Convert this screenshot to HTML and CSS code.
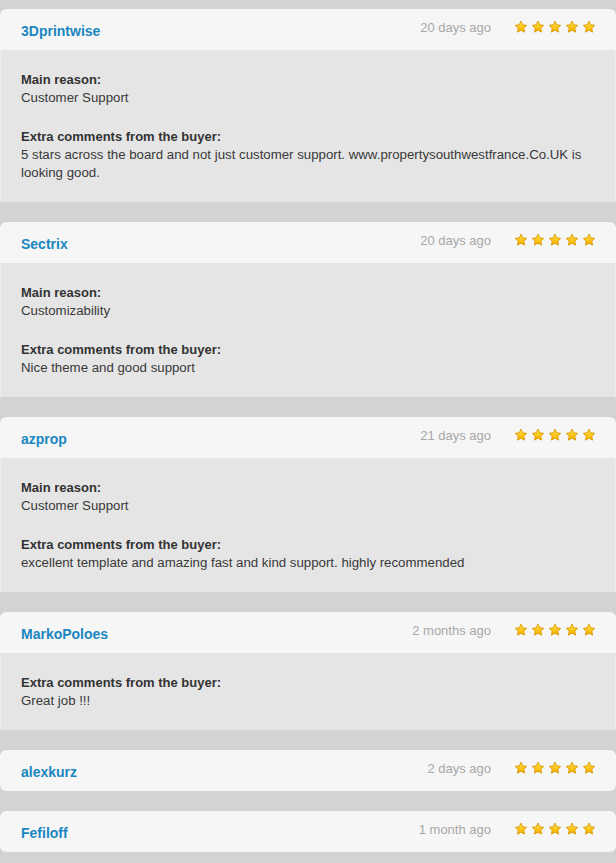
FILE: index.html
```html
<!DOCTYPE html>
<html lang="en">
<head>
    <meta charset="UTF-8">
    <meta name="viewport" content="width=device-width, initial-scale=1.0">
    <title>Buyer Reviews</title>
    <link rel="stylesheet" href="styles.css">
</head>
<body>
    <svg width="0" height="0" class="defs">
        <defs>
            <linearGradient id="star-fill" x1="0" y1="0" x2="0" y2="1">
                <stop offset="0" stop-color="#ffe15a"/>
                <stop offset="0.6" stop-color="#fcc313"/>
                <stop offset="1" stop-color="#f5a800"/>
            </linearGradient>
            <symbol id="star" viewBox="0 0 16 16">
                <path d="M8 1.2l2 4.3 4.6.6-3.4 3.2.9 4.6L8 11.6l-4.1 2.3.9-4.6L1.4 6.1 6 5.5z" fill="url(#star-fill)" stroke="#d99a00" stroke-width="1" stroke-linejoin="round"/>
            </symbol>
        </defs>
    </svg>

    <div class="reviews">
        <div class="review">
            <div class="review-head">
                <a class="buyer" href="#">3Dprintwise</a>
                <span class="date">20 days ago</span>
                <span class="stars">
                    <svg><use href="#star"/></svg><svg><use href="#star"/></svg><svg><use href="#star"/></svg><svg><use href="#star"/></svg><svg><use href="#star"/></svg>
                </span>
            </div>
            <div class="review-body">
                <p><strong>Main reason:</strong><br>Customer Support</p>
                <p><strong>Extra comments from the buyer:</strong><br>5 stars across the board and not just customer support. www.propertysouthwestfrance.Co.UK is looking good.</p>
            </div>
        </div>

        <div class="review">
            <div class="review-head">
                <a class="buyer" href="#">Sectrix</a>
                <span class="date">20 days ago</span>
                <span class="stars">
                    <svg><use href="#star"/></svg><svg><use href="#star"/></svg><svg><use href="#star"/></svg><svg><use href="#star"/></svg><svg><use href="#star"/></svg>
                </span>
            </div>
            <div class="review-body">
                <p><strong>Main reason:</strong><br>Customizability</p>
                <p><strong>Extra comments from the buyer:</strong><br>Nice theme and good support</p>
            </div>
        </div>

        <div class="review">
            <div class="review-head">
                <a class="buyer" href="#">azprop</a>
                <span class="date">21 days ago</span>
                <span class="stars">
                    <svg><use href="#star"/></svg><svg><use href="#star"/></svg><svg><use href="#star"/></svg><svg><use href="#star"/></svg><svg><use href="#star"/></svg>
                </span>
            </div>
            <div class="review-body">
                <p><strong>Main reason:</strong><br>Customer Support</p>
                <p><strong>Extra comments from the buyer:</strong><br>excellent template and amazing fast and kind support. highly recommended</p>
            </div>
        </div>

        <div class="review">
            <div class="review-head">
                <a class="buyer" href="#">MarkoPoloes</a>
                <span class="date">2 months ago</span>
                <span class="stars">
                    <svg><use href="#star"/></svg><svg><use href="#star"/></svg><svg><use href="#star"/></svg><svg><use href="#star"/></svg><svg><use href="#star"/></svg>
                </span>
            </div>
            <div class="review-body">
                <p><strong>Extra comments from the buyer:</strong><br>Great job !!!</p>
            </div>
        </div>

        <div class="review">
            <div class="review-head">
                <a class="buyer" href="#">alexkurz</a>
                <span class="date">2 days ago</span>
                <span class="stars">
                    <svg><use href="#star"/></svg><svg><use href="#star"/></svg><svg><use href="#star"/></svg><svg><use href="#star"/></svg><svg><use href="#star"/></svg>
                </span>
            </div>
        </div>

        <div class="review">
            <div class="review-head">
                <a class="buyer" href="#">Fefiloff</a>
                <span class="date">1 month ago</span>
                <span class="stars">
                    <svg><use href="#star"/></svg><svg><use href="#star"/></svg><svg><use href="#star"/></svg><svg><use href="#star"/></svg><svg><use href="#star"/></svg>
                </span>
            </div>
        </div>
    </div>
</body>
</html>
```

FILE: styles.css
```css
body {
    margin: 0;
    padding: 9px 0 0;
    background-color: #d4d3d1;
    font-family: "Helvetica Neue", "Liberation Sans", Arial, sans-serif;
    font-size: 13px;
    color: #383838;
}

.defs {
    position: absolute;
}

.reviews {
    display: flex;
    flex-direction: column;
    gap: 20px;
}

.review-head {
    display: flex;
    align-items: center;
    height: 41px;
    padding: 0 20px 0 21px;
    background-color: #f6f6f6;
    border-radius: 6px;
    box-shadow: 0 0 1px rgba(0, 0, 0, 0.08);
}

.review:has(.review-body) .review-head {
    border-radius: 6px 6px 0 0;
}

.buyer {
    flex-grow: 1;
    color: #1a87c0;
    font-size: 14px;
    font-weight: bold;
    text-decoration: none;
    padding-top: 2px;
}

.date {
    color: #a8a8a8;
    margin-bottom: 4px;
}

.stars {
    display: flex;
    gap: 3px;
    margin-left: 23px;
    margin-bottom: 6px;
}

.stars svg {
    width: 14px;
    height: 14px;
}

.review-body {
    background-color: #e5e5e5;
    border-left: 1px solid #ececec;
    border-right: 1px solid #ececec;
    padding: 21px 8px 20px 20px;
    font-size: 13.25px;
    line-height: 18px;
}

.review-body p {
    margin: 0 0 21px;
}

.review-body p:last-child {
    margin-bottom: 0;
}

.review-body strong {
    color: #333;
    font-size: 13px;
}
```
